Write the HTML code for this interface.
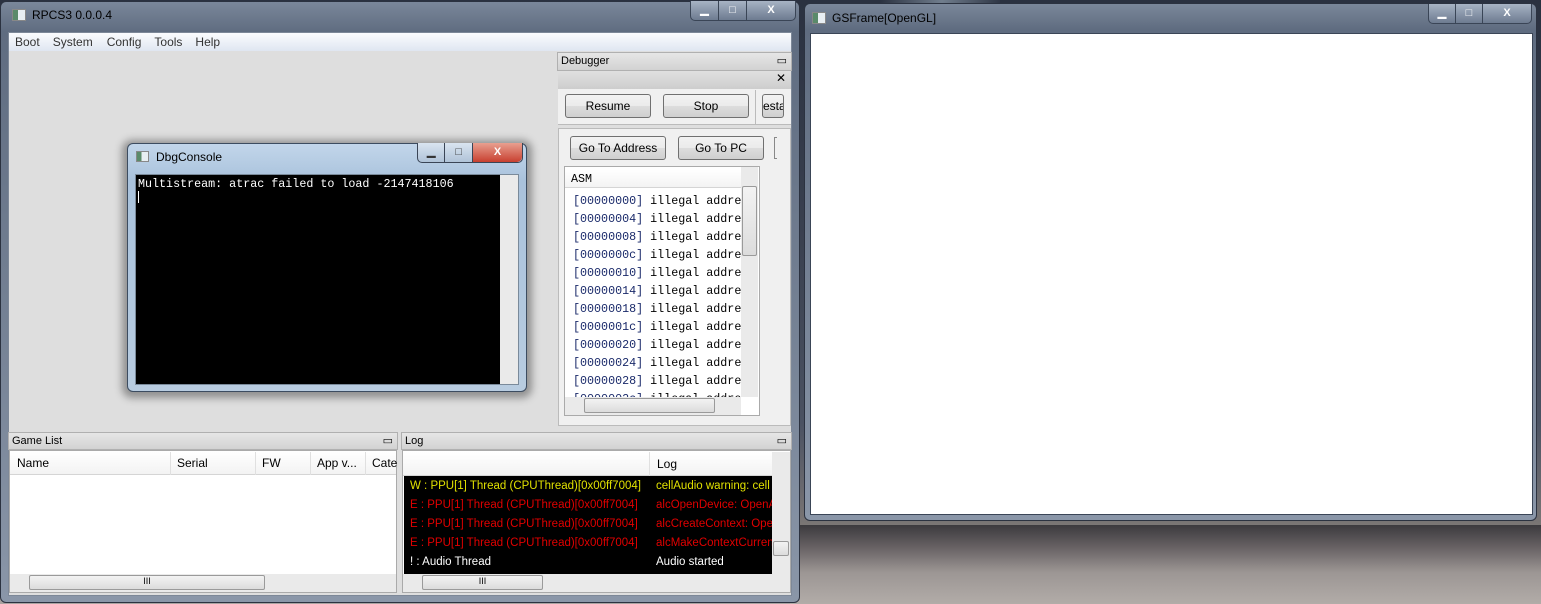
<!DOCTYPE html>
<html><head><style>
*{margin:0;padding:0;box-sizing:border-box}
body{width:1541px;height:604px;overflow:hidden;position:relative;font-family:"Liberation Sans",sans-serif;font-size:12px;background:linear-gradient(180deg,#2a3140 0%,#3a4150 40%,#4b5262 70%,#7d7876 88%,#a9a3a1 100%)}
.a{position:absolute}
.win{background:linear-gradient(180deg,#7a879a 0%,#5f6c80 5%,#8a96a8 100%);border:1px solid #2b3240;border-radius:6px}
.tb{color:#000;font-size:12px}
.cbtns{position:absolute;top:0;height:20px;border:1px solid #3a4556;border-top:none;border-radius:0 0 5px 5px;background:linear-gradient(#a7b3c4,#6d7b90);display:flex}
.cbtns div{border-right:1px solid #3a4556;color:#fff;font-weight:bold;text-align:center;line-height:18px;font-size:11px}
.btn{position:absolute;border:1px solid #707070;border-radius:3px;background:linear-gradient(#f2f2f2,#ebebeb 50%,#dddddd 51%,#cfcfcf);text-align:center;font-size:12px;color:#000}
.mono{font-family:"Liberation Mono",monospace;font-size:11.7px}
.hdr{background:linear-gradient(#fff,#f3f3f3);border-bottom:1px solid #d5d5d5}
.sb{background:#eaeaea}
.thumb{position:absolute;border:1px solid #9a9a9a;border-radius:2px;background:linear-gradient(#f3f3f3,#dcdcdc)}
.lr{position:relative;height:19px}
.lr span{position:absolute;top:0}
</style></head><body>
<div class="a" style="left:880px;top:0;width:120px;height:25px;background:linear-gradient(100deg,transparent,#9fb0c0 50%,transparent);opacity:.6"></div>
<div class="a" style="left:790px;top:525px;width:751px;height:79px;background:linear-gradient(180deg,#3c3a3e 0%,#6a6466 30%,#9c9694 60%,#b2aca8 100%)"></div>

<div class="a win" style="left:0;top:1px;width:800px;height:602px"></div>
<div class="a" style="left:12px;top:9px;width:14px;height:12px;background:linear-gradient(90deg,#5a8a6a 40%,#e8eef2 40%);border:1px solid #888"></div>
<div class="a tb" style="left:32px;top:8px;font-size:12px">RPCS3 0.0.0.4</div>
<div class="cbtns" style="left:690px;top:1px;width:106px"><div style="width:28px">▁</div><div style="width:28px">□</div><div style="width:48px;border:none">X</div></div>

<div class="a" style="left:8px;top:32px;width:784px;height:564px;background:#dedede;border:1px solid #7d8898"></div>
<div class="a" style="left:9px;top:33px;width:782px;height:18px;background:linear-gradient(#fbfcfe,#dfe6f1);color:#333;font-size:12px;line-height:18px">
<span style="margin-left:6px">Boot</span><span style="margin-left:13px">System</span><span style="margin-left:14px">Config</span><span style="margin-left:13px">Tools</span><span style="margin-left:13px">Help</span></div>

<div class="a" style="left:557px;top:52px;width:235px;height:19px;background:linear-gradient(#e6e6e6,#d2d2d2);border:1px solid #b0b0b0;font-size:11px;line-height:16px;padding-left:3px">Debugger<span style="position:absolute;right:4px;top:0">▭</span></div>
<div class="a" style="left:558px;top:71px;width:233px;height:18px;background:linear-gradient(#e0e0e0,#cdcdcd);text-align:right;padding-right:5px;font-size:12px">✕</div>
<div class="a" style="left:558px;top:89px;width:233px;height:36px;background:#f0f0f0;border-bottom:1px solid #bbb"></div>
<div class="btn" style="left:565px;top:94px;width:86px;height:24px;line-height:22px">Resume</div>
<div class="btn" style="left:663px;top:94px;width:86px;height:24px;line-height:22px">Stop</div>
<div class="a" style="left:755px;top:90px;width:1px;height:34px;background:#bbb"></div>
<div class="btn" style="left:762px;top:94px;width:22px;height:24px;line-height:22px;overflow:hidden;text-align:right">esta</div>
<div class="a" style="left:558px;top:128px;width:233px;height:298px;background:#f0f0f0;border:1px solid #bbb"></div>
<div class="btn" style="left:570px;top:136px;width:96px;height:24px;line-height:22px">Go To Address</div>
<div class="btn" style="left:678px;top:136px;width:86px;height:24px;line-height:22px">Go To PC</div>
<div class="a" style="left:774px;top:137px;width:3px;height:22px;border:1px solid #888;border-right:none"></div>
<div class="a" style="left:564px;top:166px;width:196px;height:250px;background:#fff;border:1px solid #aaa"></div>
<div class="a hdr mono" style="left:565px;top:170px;width:176px;height:18px;line-height:18px;padding-left:6px">ASM</div>
<div class="a mono" style="left:573px;top:192px;line-height:18px;color:#000;white-space:pre;width:168px;height:206px;overflow:hidden"><span style="color:#1a2a6a">[00000000]</span> illegal addre
<span style="color:#1a2a6a">[00000004]</span> illegal addre
<span style="color:#1a2a6a">[00000008]</span> illegal addre
<span style="color:#1a2a6a">[0000000c]</span> illegal addre
<span style="color:#1a2a6a">[00000010]</span> illegal addre
<span style="color:#1a2a6a">[00000014]</span> illegal addre
<span style="color:#1a2a6a">[00000018]</span> illegal addre
<span style="color:#1a2a6a">[0000001c]</span> illegal addre
<span style="color:#1a2a6a">[00000020]</span> illegal addre
<span style="color:#1a2a6a">[00000024]</span> illegal addre
<span style="color:#1a2a6a">[00000028]</span> illegal addre
<span style="color:#1a2a6a">[0000002c]</span> illegal addre</div>
<div class="a sb" style="left:741px;top:167px;width:17px;height:230px"></div>
<div class="thumb" style="left:742px;top:186px;width:15px;height:70px"></div>
<div class="a sb" style="left:565px;top:397px;width:176px;height:18px"></div>
<div class="thumb" style="left:584px;top:398px;width:131px;height:15px"></div>

<div class="a" style="left:8px;top:432px;width:390px;height:18px;background:linear-gradient(#e6e6e6,#d2d2d2);border:1px solid #b0b0b0;font-size:11px;line-height:16px;padding-left:3px">Game List<span style="position:absolute;right:4px;top:0">▭</span></div>
<div class="a" style="left:9px;top:450px;width:388px;height:143px;background:#fff;border:1px solid #aaa"></div>
<div class="a hdr" style="left:10px;top:452px;width:386px;height:23px;font-size:12px;line-height:23px">
<span class="a" style="left:7px">Name</span><span class="a" style="left:160px;border-left:1px solid #e0e0e0;height:23px;padding-left:6px">Serial</span><span class="a" style="left:245px;border-left:1px solid #e0e0e0;height:23px;padding-left:6px">FW</span><span class="a" style="left:300px;border-left:1px solid #e0e0e0;height:23px;padding-left:6px">App v...</span><span class="a" style="left:355px;border-left:1px solid #e0e0e0;height:23px;padding-left:6px">Cate</span></div>
<div class="a sb" style="left:10px;top:574px;width:386px;height:18px"></div>
<div class="thumb" style="left:29px;top:575px;width:236px;height:15px;text-align:center;font-size:9px">III</div>

<div class="a" style="left:401px;top:432px;width:391px;height:18px;background:linear-gradient(#e6e6e6,#d2d2d2);border:1px solid #b0b0b0;font-size:11px;line-height:16px;padding-left:3px">Log<span style="position:absolute;right:4px;top:0">▭</span></div>
<div class="a" style="left:402px;top:450px;width:389px;height:143px;background:#fff;border:1px solid #aaa"></div>
<div class="a hdr" style="left:403px;top:452px;width:369px;height:24px;font-size:12px;line-height:24px"><span class="a" style="left:246px;border-left:1px solid #e0e0e0;height:24px;padding-left:7px">Log</span></div>
<div class="a" style="left:404px;top:476px;width:368px;height:98px;background:#000;font-size:11.5px;line-height:19px;white-space:nowrap;overflow:hidden;padding-top:1px"><div class="lr" style="color:#e0e000"><span style="left:6px">W : PPU[1] Thread (CPUThread)[0x00ff7004]</span><span style="left:252px">cellAudio warning: cell</span></div><div class="lr" style="color:#e00000"><span style="left:6px">E : PPU[1] Thread (CPUThread)[0x00ff7004]</span><span style="left:252px">alcOpenDevice: OpenAL</span></div><div class="lr" style="color:#e00000"><span style="left:6px">E : PPU[1] Thread (CPUThread)[0x00ff7004]</span><span style="left:252px">alcCreateContext: Open</span></div><div class="lr" style="color:#e00000"><span style="left:6px">E : PPU[1] Thread (CPUThread)[0x00ff7004]</span><span style="left:252px">alcMakeContextCurrent</span></div><div class="lr" style="color:#fff"><span style="left:6px">! : Audio Thread</span><span style="left:252px">Audio started</span></div></div>
<div class="a sb" style="left:772px;top:452px;width:18px;height:122px"></div>
<div class="thumb" style="left:773px;top:541px;width:16px;height:15px"></div>
<div class="a sb" style="left:403px;top:574px;width:387px;height:18px"></div>
<div class="thumb" style="left:422px;top:575px;width:121px;height:15px;text-align:center;font-size:9px">III</div>

<div class="a" style="left:122px;top:140px;width:410px;height:258px;background:rgba(0,0,0,.35);border-radius:10px;filter:blur(4px)"></div>
<div class="a" style="left:127px;top:143px;width:400px;height:249px;background:linear-gradient(180deg,#c2d6ea,#a9c2dc 15%,#b8cce0);border:1px solid #3c4c60;border-radius:6px"></div>
<div class="a" style="left:136px;top:151px;width:13px;height:11px;background:linear-gradient(90deg,#5a8a6a 40%,#e8eef2 40%);border:1px solid #888"></div>
<div class="a" style="left:156px;top:150px;font-size:12px">DbgConsole</div>
<div class="cbtns" style="left:417px;top:143px;width:106px;background:linear-gradient(#d9e4f0,#b0c3d8)"><div style="width:28px;color:#333">▁</div><div style="width:28px;color:#333">□</div><div style="width:50px;border:none;background:linear-gradient(#e8a090,#c84030);border-radius:0 0 5px 0">X</div></div>
<div class="a" style="left:135px;top:174px;width:384px;height:211px;background:#fff;border:1px solid #7a8a9a"></div>
<div class="a mono" style="left:136px;top:175px;width:364px;height:209px;background:#000;color:#fff;padding:2px 2px;line-height:14px">Multistream: atrac failed to load -2147418106<br><span style="display:inline-block;width:1px;height:12px;background:#fff"></span></div>
<div class="a sb" style="left:500px;top:175px;width:18px;height:209px"></div>

<div class="a win" style="left:804px;top:3px;width:733px;height:518px"></div>
<div class="a" style="left:812px;top:12px;width:14px;height:12px;background:linear-gradient(90deg,#5a8a6a 40%,#e8eef2 40%);border:1px solid #888"></div>
<div class="a tb" style="left:832px;top:11px">GSFrame[OpenGL]</div>
<div class="cbtns" style="left:1428px;top:4px;width:104px"><div style="width:27px">▁</div><div style="width:27px">□</div><div style="width:48px;border:none">X</div></div>
<div class="a" style="left:810px;top:33px;width:723px;height:482px;background:#fff;border:1px solid #3a4556"></div>
</body></html>
